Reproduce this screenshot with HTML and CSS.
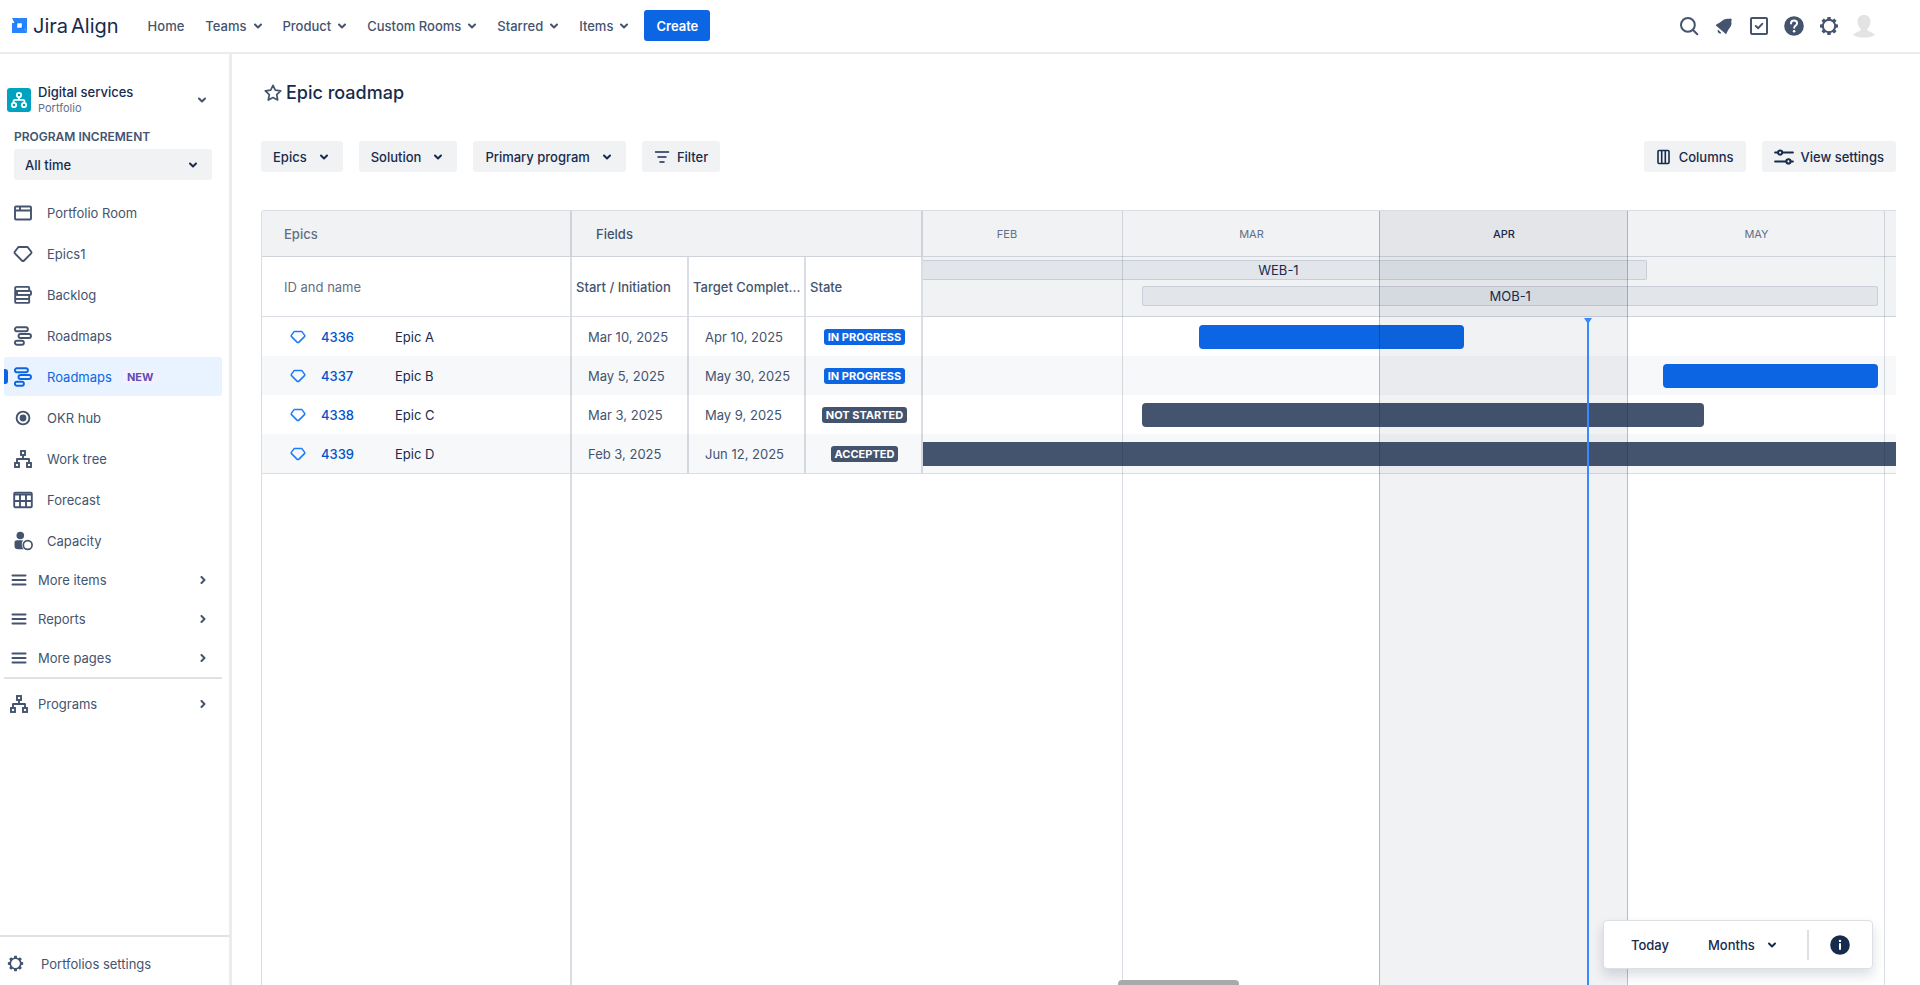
FILE: index.html
```html
<!DOCTYPE html>
<html lang="en">
<head>
<meta charset="utf-8">
<meta name="viewport" content="width=device-width, initial-scale=1">
<title>Epic roadmap - Jira Align</title>
<link rel="stylesheet" href="styles.css">
</head>
<body>
<svg class="sprite" aria-hidden="true">
  <symbol id="chev-down" viewBox="0 0 8 8"><path d="M1 2.5 4 5.5 7 2.5" fill="none" stroke="currentColor" stroke-width="2" stroke-linecap="round" stroke-linejoin="round"/></symbol>
  <symbol id="chev-right" viewBox="0 0 8 8"><path d="M2.5 1 5.5 4 2.5 7" fill="none" stroke="currentColor" stroke-width="2" stroke-linecap="round" stroke-linejoin="round"/></symbol>
  <symbol id="diamond" viewBox="0 0 20 20"><path d="M5.4 3h9.2L18.4 8v1.2L10.6 17h-1.2L1.6 9.200V8z" fill="none" stroke="currentColor" stroke-width="1.900" stroke-linejoin="round"/></symbol>
  <symbol id="gear" viewBox="0 0 20 20"><circle cx="10" cy="10" r="6.200" fill="none" stroke="currentColor" stroke-width="2"/><g fill="currentColor"><path id="tooth" d="M8 4.600 8.400 1h3.200L12 4.600z"/><use href="#tooth" transform="rotate(45 10 10)"/><use href="#tooth" transform="rotate(90 10 10)"/><use href="#tooth" transform="rotate(135 10 10)"/><use href="#tooth" transform="rotate(180 10 10)"/><use href="#tooth" transform="rotate(225 10 10)"/><use href="#tooth" transform="rotate(270 10 10)"/><use href="#tooth" transform="rotate(315 10 10)"/></g></symbol>
  <symbol id="tree" viewBox="0 0 20 20"><g fill="none" stroke="currentColor" stroke-width="1.900"><rect x="8" y="2" width="4" height="4"/><rect x="2" y="14" width="4" height="4"/><rect x="14" y="14" width="4" height="4"/><path d="M10 6v4M4 14v-4h12v4" stroke-linejoin="round"/></g></symbol>
  <symbol id="roadmap" viewBox="0 0 20 20"><g fill="none" stroke="currentColor" stroke-width="1.900"><rect x="1.900" y="1.300" width="13" height="4" rx="2"/><rect x="5.500" y="8" width="12.500" height="4" rx="2"/><rect x="1.900" y="14.700" width="9" height="4" rx="2"/></g></symbol>
  <symbol id="menu" viewBox="0 0 20 20"><path d="M3.500 5.500h13M3.500 10h13M3.500 14.500h13" fill="none" stroke="currentColor" stroke-width="2" stroke-linecap="round"/></symbol>
</svg>

<header class="topbar">
  <a class="logo" href="#">
    <svg class="logo-mark" viewBox="0 0 15 15" aria-hidden="true"><path fill="#2684ff" fill-rule="evenodd" d="M0 0h15v10.500h-2.500L15 15H0V5h2.500L0 0zM5.200 5.200v4.600h4.600V5.200z"/><path fill="#2684ff" d="M12 9h3v6z"/><path fill="#0065ff" opacity=".45" d="M2.500 4.500H9L5.200 5.200 4 8zM12.500 10.500H6l3.800-.7L11 7z"/></svg>
    <span class="logo-text"><span>Jira</span><span>Align</span></span>
  </a>
  <nav class="mainnav">
    <a href="#">Home</a>
    <button type="button">Teams<svg class="chev"><use href="#chev-down"/></svg></button>
    <button type="button">Product<svg class="chev"><use href="#chev-down"/></svg></button>
    <button type="button">Custom Rooms<svg class="chev"><use href="#chev-down"/></svg></button>
    <button type="button">Starred<svg class="chev"><use href="#chev-down"/></svg></button>
    <button type="button">Items<svg class="chev"><use href="#chev-down"/></svg></button>
  </nav>
  <button type="button" class="create">Create</button>
  <div class="tools">
    <button type="button" aria-label="Search"><svg viewBox="0 0 24 24"><g fill="none" stroke="currentColor" stroke-width="2"><circle cx="10.900" cy="10.900" r="6.900"/><path d="M16 16l4.300 4.300" stroke-linecap="round"/></g></svg></button>
    <button type="button" aria-label="Notifications"><svg viewBox="0 0 24 24"><path fill="currentColor" d="M3.600 11.200C5.300 10 8.800 8.300 10.500 6.600 12.500 4.800 15.500 4.200 17.200 5c.8-.6 2-.6 2.300.2.400.7.200 1.400-.3 2 .7 2 .3 4.500-1.500 6.600-1.500 1.800-2.400 4-3.600 6.500z"/><path fill="currentColor" d="M6 15.500l3.400 3.400c-1 .8-2.300.7-3-.1-.8-.9-1-2.200-.4-3.300z"/></svg></button>
    <button type="button" aria-label="Tasks"><svg viewBox="0 0 24 24"><g fill="none" stroke="currentColor" stroke-width="2"><rect x="4" y="4" width="16" height="16" rx="1"/><path d="M8.800 12l2.400 2.200 4-4.400" stroke-linecap="round" stroke-linejoin="round"/></g></svg></button>
    <button type="button" aria-label="Help"><svg viewBox="0 0 24 24"><circle cx="12" cy="12" r="9.800" fill="currentColor"/><path d="M9 9.400c0-1.800 1.300-3 3-3s3.100 1.100 3.100 2.800c0 2.200-2.900 2.300-2.900 4.600" fill="none" stroke="#fff" stroke-width="2" stroke-linecap="round"/><circle cx="12.100" cy="17.200" r="1.300" fill="#fff"/></svg></button>
    <button type="button" aria-label="Settings"><svg class="tool-gear"><use href="#gear"/></svg></button>
    <button type="button" aria-label="Profile"><svg viewBox="0 0 24 24"><path fill="#e3e3e3" d="M12 1c4 0 6.500 2.600 6.500 6.300 0 3.200-1.300 5.700-3 7.200v2c1 1 5 1.700 7.300 4.500C20 23 16 23.500 12 23.500S4 23 1.200 21c2.300-2.800 6.300-3.500 7.300-4.500v-2c-1.700-1.500-3-4-3-7.200C5.500 3.600 8 1 12 1z"/></svg></button>
  </div>
</header>

<div class="shell">
  <aside class="sidebar">
    <button type="button" class="portfolio">
      <span class="portfolio-icon"><svg viewBox="0 0 20 20"><g fill="none" stroke="#fff" stroke-width="1.800"><circle cx="10" cy="5" r="2.200"/><circle cx="5" cy="15" r="2.200"/><circle cx="15" cy="15" r="2.200"/><path d="M10 7.200v2.600M4.500 12.500v-1c0-1 .6-1.600 1.600-1.600h7.800c1 0 1.600.6 1.600 1.600v1"/></g></svg></span>
      <span class="portfolio-text"><span class="portfolio-name">Digital services</span><span class="portfolio-kind">Portfolio</span></span>
      <svg class="chev"><use href="#chev-down"/></svg>
    </button>
    <div class="increment">
      <label for="pi">PROGRAM INCREMENT</label>
      <div class="select-wrap">
        <select id="pi"><option>All time</option></select>
        <svg class="chev"><use href="#chev-down"/></svg>
      </div>
    </div>
    <nav class="sidenav">
      <a href="#"><svg viewBox="0 0 20 20"><g fill="none" stroke="currentColor" stroke-width="1.900"><rect x="2" y="3.500" width="16" height="13" rx="1"/><path d="M2 7.500h16M7 3.500v4"/></g></svg>Portfolio Room</a>
      <a href="#"><svg><use href="#diamond"/></svg>Epics1</a>
      <a href="#"><svg viewBox="0 0 20 20"><g fill="none" stroke="currentColor" stroke-width="1.900"><rect x="2.200" y="1.900" width="14" height="4" rx="1"/><rect x="4" y="5.900" width="14" height="4" rx="1"/><rect x="2.200" y="9.900" width="14" height="4" rx=".5"/><rect x="2.200" y="13.900" width="14" height="4" rx="1"/><path d="M2.200 6v4"/></g></svg>Backlog</a>
      <a href="#"><svg><use href="#roadmap"/></svg>Roadmaps</a>
      <a href="#" class="selected" aria-current="page"><svg><use href="#roadmap"/></svg>Roadmaps<span class="new">NEW</span></a>
      <a href="#"><svg viewBox="0 0 20 20"><circle cx="10" cy="10" r="6.400" fill="none" stroke="currentColor" stroke-width="1.900"/><circle cx="10" cy="10" r="3.400" fill="currentColor"/></svg>OKR hub</a>
      <a href="#"><svg><use href="#tree"/></svg>Work tree</a>
      <a href="#"><svg viewBox="0 0 20 20"><g fill="none" stroke="currentColor" stroke-width="1.900"><rect x="1.200" y="2.800" width="17.600" height="14.400" rx="1"/><path d="M1.200 4.600h17.600M1.200 11h17.600M7 4v13M13 4v13"/></g></svg>Forecast</a>
      <a href="#"><svg viewBox="0 0 20 20"><circle cx="7.300" cy="4.500" r="3.800" fill="currentColor"/><path d="M1.500 11.500c0-1.500 1-2.300 2.500-2.300h6c-2 3-1.300 7 .8 9H5c-2.200 0-3.500-1.200-3.500-3z" fill="currentColor"/><circle cx="14.700" cy="14" r="4.400" fill="none" stroke="currentColor" stroke-width="1.700"/></svg>Capacity</a>
    </nav>
    <nav class="sidegroups">
      <button type="button"><svg class="g-icon"><use href="#menu"/></svg>More items<svg class="chev"><use href="#chev-right"/></svg></button>
      <button type="button"><svg class="g-icon"><use href="#menu"/></svg>Reports<svg class="chev"><use href="#chev-right"/></svg></button>
      <button type="button"><svg class="g-icon"><use href="#menu"/></svg>More pages<svg class="chev"><use href="#chev-right"/></svg></button>
    </nav>
    <nav class="sidegroups programs">
      <button type="button"><svg class="g-icon"><use href="#tree"/></svg>Programs<svg class="chev"><use href="#chev-right"/></svg></button>
    </nav>
    <a class="side-footer" href="#"><svg><use href="#gear"/></svg>Portfolios settings</a>
  </aside>

  <main class="content">
    <h1><svg viewBox="0 0 20 20" aria-hidden="true"><path d="M10 2.300l2.300 4.900 5.400.7-4 3.700 1 5.400L10 14.500 5.300 17l1-5.400-4-3.700 5.400-.7z" fill="none" stroke="#44546f" stroke-width="1.700" stroke-linejoin="round"/></svg>Epic roadmap</h1>
    <div class="toolbar">
      <button type="button" class="btn menu">Epics<svg class="chev"><use href="#chev-down"/></svg></button>
      <button type="button" class="btn menu">Solution<svg class="chev"><use href="#chev-down"/></svg></button>
      <button type="button" class="btn menu">Primary program<svg class="chev"><use href="#chev-down"/></svg></button>
      <button type="button" class="btn"><svg class="btn-icon" viewBox="0 0 16 16"><path d="M1.500 3h13M4 8h8M6 13h4" fill="none" stroke="currentColor" stroke-width="1.500" stroke-linecap="round"/></svg>Filter</button>
      <span class="spacer"></span>
      <button type="button" class="btn"><svg class="btn-icon" viewBox="0 0 16 16"><g fill="none" stroke="currentColor" stroke-width="1.600"><rect x="2" y="1.500" width="11" height="13" rx="1"/><path d="M5.700 2v12M9.300 2v12"/></g></svg>Columns</button>
      <button type="button" class="btn"><svg class="btn-icon wide" viewBox="1 0 18 16"><g fill="none" stroke="currentColor" stroke-width="1.800" stroke-linecap="round"><path d="M2 4h2.500M8.500 4H18M2 12h10M16 12h2"/><circle cx="6.500" cy="4" r="1.900"/><circle cx="14" cy="12" r="1.900"/></g></svg>View settings</button>
    </div>

    <section class="roadmap">
      <div class="grid-pane">
        <table>
          <colgroup><col class="c-name"><col class="c-field"><col class="c-field"><col class="c-field"></colgroup>
          <thead>
            <tr class="h1row"><th>Epics</th><th colspan="3" class="fields">Fields</th></tr>
            <tr class="h2row"><th>ID and name</th><th>Start / Initiation</th><th>Target Complet...</th><th>State</th></tr>
          </thead>
          <tbody>
            <tr><td><div class="epic"><svg><use href="#diamond"/></svg><a href="#">4336</a><span>Epic A</span></div></td><td>Mar 10, 2025</td><td>Apr 10, 2025</td><td class="state"><span class="badge blue">IN PROGRESS</span></td></tr>
            <tr><td><div class="epic"><svg><use href="#diamond"/></svg><a href="#">4337</a><span>Epic B</span></div></td><td>May 5, 2025</td><td>May 30, 2025</td><td class="state"><span class="badge blue">IN PROGRESS</span></td></tr>
            <tr><td><div class="epic"><svg><use href="#diamond"/></svg><a href="#">4338</a><span>Epic C</span></div></td><td>Mar 3, 2025</td><td>May 9, 2025</td><td class="state"><span class="badge">NOT STARTED</span></td></tr>
            <tr><td><div class="epic"><svg><use href="#diamond"/></svg><a href="#">4339</a><span>Epic D</span></div></td><td>Feb 3, 2025</td><td>Jun 12, 2025</td><td class="state"><span class="badge">ACCEPTED</span></td></tr>
          </tbody>
        </table>
        <div class="grid-rest"><div class="rest-name"></div></div>
      </div>
      <div class="timeline">
        <div class="months cols"><span class="partial">FEB</span><span>MAR</span><span class="now">APR</span><span>MAY</span><span></span></div>
        <div class="increments">
          <div class="inc open-left" style="width:74.4%">WEB-1</div>
          <div class="inc" style="margin-left:22.5%;width:75.7%">MOB-1</div>
        </div>
        <div class="lane"><div class="bar blue" style="margin-left:28.4%;width:27.2%"></div></div>
        <div class="lane"><div class="bar blue" style="margin-left:76.1%;width:22.1%"></div></div>
        <div class="lane"><div class="bar" style="margin-left:22.5%;width:57.8%"></div></div>
        <div class="lane"><div class="bar open" style="width:100%"></div></div>
        <div class="lane-end"></div>
        <div class="month-lines cols"><span></span><span></span><span class="now"></span><span></span><span></span></div>
        <div class="today" style="left:68.2%"></div>
        <div class="scroll-thumb"></div>
      </div>
      <div class="zoombar">
        <button type="button">Today</button>
        <label class="scale"><select aria-label="Timeline scale"><option>Months</option></select><svg class="chev"><use href="#chev-down"/></svg></label>
        <span class="rule"></span>
        <button type="button" class="info" aria-label="Legend"><svg viewBox="0 0 20 20"><circle cx="10" cy="10" r="9.800" fill="#172b4d"/><circle cx="10" cy="5.900" r="1.200" fill="#fff"/><path d="M10 9v5" stroke="#fff" stroke-width="2" stroke-linecap="round"/></svg></button>
      </div>
    </section>
  </main>
</div>
</body>
</html>
```
FILE: styles.css
```css
:root {
  --ink: #172b4d;
  --text: #44546f;
  --subtle: #626f86;
  --blue: #0c66e4;
  --line: rgba(9, 30, 66, 0.15);
  --hairline: #ebecf0;
  --fill: #f1f2f4;
}

* { box-sizing: border-box; }

body {
  margin: 0;
  height: 100vh;
  display: flex;
  flex-direction: column;
  overflow: hidden;
  background: #fff;
  color: var(--text);
  font: 400 13px/20px Inter, "Liberation Sans", sans-serif;
}

a { color: inherit; text-decoration: none; }

button, select {
  font: inherit;
  color: inherit;
  border: 0;
  background: none;
  padding: 0;
  margin: 0;
  cursor: pointer;
}

select { appearance: none; }
svg { display: block; flex: none; }
.sprite { position: absolute; width: 0; height: 0; }
.chev { width: 8px; height: 8px; }

/* Top bar */
.topbar {
  flex: none;
  display: flex;
  align-items: center;
  height: 54px;
  padding: 0 44px 1px 12px;
  border-bottom: 2px solid var(--hairline);
  font-weight: 500;
}

.logo {
  display: flex;
  align-items: center;
  gap: 6px;
  margin-right: 29px;
  color: var(--ink);
  font-size: 20px;
  font-weight: 400;
}

.logo-text { display: flex; gap: 3px; }
.logo-mark { width: 15px; height: 15px; }
.mainnav { display: flex; gap: 21px; }
.mainnav button { display: flex; align-items: center; gap: 7px; font-weight: 500; }

.create {
  height: 31px;
  margin-left: 16px;
  padding: 0 12px;
  border-radius: 3px;
  background: var(--blue);
  color: #fff;
  font-weight: 600;
}

.tools { display: flex; gap: 11px; margin-left: auto; }
.tools button, .tools svg { width: 24px; height: 24px; }
.tools .tool-gear { width: 20px; height: 20px; margin: 2px; }

/* Sidebar */
.shell { flex: 1; display: flex; min-height: 0; }

.sidebar {
  flex: none;
  display: flex;
  flex-direction: column;
  width: 232px;
  padding-top: 27px;
  border-right: 3px solid var(--hairline);
}

.portfolio {
  display: flex;
  align-items: center;
  height: 38px;
  padding: 0 23px 0 7px;
  text-align: left;
}

.portfolio-icon {
  display: grid;
  place-items: center;
  width: 24px;
  height: 24px;
  margin-right: 7px;
  border-radius: 3px;
  background: #00a3bf;
}

.portfolio-icon svg { width: 20px; height: 20px; }
.portfolio-text { display: flex; flex-direction: column; flex: 1; }
.portfolio-name { color: var(--ink); font-weight: 500; line-height: 16px; }
.portfolio-kind { color: var(--subtle); font-size: 11px; line-height: 16px; }

.increment { padding: 8px 17px 0 14px; }
.increment label { display: block; font-size: 12px; font-weight: 600; line-height: 20px; }
.select-wrap { position: relative; margin-top: 2px; color: var(--ink); }

.select-wrap select {
  width: 100%;
  height: 31px;
  padding: 0 11px;
  border-radius: 3px;
  background: var(--fill);
  font-weight: 500;
}

.select-wrap .chev { position: absolute; right: 15px; top: 12px; pointer-events: none; }

.sidenav {
  display: flex;
  flex-direction: column;
  gap: 2px;
  padding: 13px 7px 0 4px;
}

.sidenav a {
  position: relative;
  display: flex;
  align-items: center;
  gap: 14px;
  height: 39px;
  padding-left: 9px;
  border-radius: 3px;
}

.sidenav svg { width: 20px; height: 20px; }
.sidenav .selected { background: #e9f2ff; color: var(--blue); }

.sidenav .selected::before {
  content: "";
  position: absolute;
  left: 0;
  top: 12px;
  width: 4px;
  height: 15px;
  border-radius: 0 3px 3px 0;
  background: var(--blue);
}

.new {
  margin-left: -3px;
  padding: 0 4px;
  border-radius: 3px;
  background: #f3f0ff;
  color: #5e4db2;
  font-size: 11px;
  font-weight: 700;
  line-height: 14px;
}

.sidegroups { display: flex; flex-direction: column; margin: 0 7px 0 4px; }

.sidegroups button {
  display: flex;
  align-items: center;
  height: 39px;
  padding: 0 15px 0 5px;
}

.g-icon { width: 20px; height: 20px; margin-right: 9px; }
.sidegroups .chev { margin-left: auto; }
.programs { padding-top: 5px; border-top: 2px solid #dfe1e6; }

.side-footer {
  display: flex;
  align-items: center;
  gap: 17px;
  height: 50px;
  margin-top: auto;
  padding: 5px 0 0 7px;
  border-top: 2px solid #dfe1e6;
}

.side-footer svg { width: 17px; height: 17px; }

/* Main column */
.content {
  flex: 1;
  display: flex;
  flex-direction: column;
  min-width: 0;
  padding: 27px 24px 0 29px;
}

h1 {
  display: flex;
  align-items: center;
  gap: 3px;
  margin: 0 0 36px 2px;
  color: var(--ink);
  font-size: 18px;
  font-weight: 500;
  line-height: 24px;
}

h1 svg { width: 20px; height: 20px; }
.toolbar { display: flex; gap: 16px; margin-bottom: 38px; }
.spacer { flex: 1; }

.btn {
  display: flex;
  align-items: center;
  gap: 7px;
  height: 31px;
  padding: 0 12px;
  border-radius: 3px;
  background: var(--fill);
  color: var(--ink);
  font-weight: 500;
}

.btn.menu { gap: 13px; padding-right: 15px; }
.btn-icon { width: 16px; height: 16px; }
.btn-icon.wide { width: 20px; height: 18px; }

/* Roadmap */
.roadmap {
  position: relative;
  flex: 1;
  display: flex;
  min-height: 0;
  border-top: 1px solid var(--line);
  border-left: 1px solid var(--line);
  border-top-left-radius: 3px;
}

.grid-pane { flex: none; display: flex; flex-direction: column; width: 661px; }

table {
  width: 100%;
  table-layout: fixed;
  border-collapse: separate;
  border-spacing: 0;
}

.c-name { width: 310px; }
th, td { padding: 0 0 0 16px; text-align: left; border-right: 2px solid var(--line); }

th {
  font-weight: 500;
  border-bottom: 1px solid var(--line);
  white-space: nowrap;
}

.h1row th { height: 46px; background: var(--fill); }
.h1row .fields { padding-left: 24px; }
.h2row th { height: 60px; padding-left: 4px; }
.h1row th:first-child, .h2row th:first-child { padding-left: 22px; color: var(--subtle); }
.h2row th:first-child { font-weight: 400; }

tbody td { height: 39px; }
tbody tr:nth-child(even) { background: #f7f8f9; }
tbody td:first-child { padding-left: 28px; }

.epic { display: grid; grid-template-columns: 31px 74px 1fr; align-items: center; color: var(--ink); }
.epic svg { width: 16px; height: 16px; color: #1d7afc; }
.epic a { color: #0055cc; font-weight: 500; }

td.state { padding: 0 0 0 2px; font-size: 11px; line-height: 16px; text-align: center; }

.badge {
  display: inline-block;
  padding: 0 4px;
  border-radius: 3px;
  background: #44546f;
  color: #fff;
  font-weight: 700;
  vertical-align: top;
}

.blue { background: var(--blue); }

.grid-rest { flex: 1; border-top: 1px solid var(--line); }
.rest-name { width: 310px; height: 100%; border-right: 2px solid var(--line); }

.timeline { position: relative; flex: 1; min-width: 0; overflow: hidden; }
.cols { display: grid; grid-template-columns: 200fr 257fr 248fr 257fr 11fr; }

.months {
  height: 46px;
  align-items: center;
  border-bottom: 1px solid var(--line);
  background: var(--fill);
  color: var(--subtle);
  font-size: 11px;
  text-align: center;
}

.months .partial { padding-right: 32px; }
.months .now { color: var(--ink); font-weight: 500; }

.increments {
  display: flex;
  flex-direction: column;
  gap: 6px;
  height: 60px;
  padding-top: 3px;
  border-bottom: 1px solid var(--line);
  background: var(--fill);
}

.inc {
  height: 20px;
  border: 1px solid #c9ced6;
  border-radius: 2px;
  background: #e2e5ea;
  color: var(--ink);
  line-height: 18px;
  text-align: center;
}

.inc.open-left { border-left: 0; border-radius: 0 2px 2px 0; padding-right: 12px; }

.lane { height: 39px; padding-top: 8px; }
.lane:nth-child(even) { background: #f7f8f9; }
.bar { height: 24px; border-radius: 4px; background: #44546f; }
.bar.blue { background: var(--blue); }
.bar.open { border-radius: 0; }
.lane-end { border-top: 1px solid var(--line); }

/* Month boundaries and the current-month tint lie over the bars */
.month-lines { position: absolute; inset: 0; pointer-events: none; }
.month-lines span { border-right: 1px solid var(--line); }
.month-lines span:last-child { border-right: 0; }
.month-lines .now { background: rgba(9, 30, 66, 0.06); border-right-color: rgba(9, 30, 66, 0.25); box-shadow: -1px 0 rgba(9, 30, 66, 0.18); }

.today {
  position: absolute;
  top: 107px;
  bottom: 0;
  width: 2px;
  background: #388bff;
}

.today::before {
  content: "";
  position: absolute;
  left: -3px;
  top: 0;
  border: 4px solid transparent;
  border-top: 6px solid #388bff;
  border-bottom: 0;
}

.scroll-thumb {
  position: absolute;
  left: 20%;
  bottom: 0;
  width: 121px;
  height: 5px;
  border-radius: 4px 4px 0 0;
  background: #a9a9ab;
}

.zoombar {
  position: absolute;
  right: 23px;
  bottom: 16px;
  display: flex;
  align-items: center;
  height: 49px;
  padding: 0 22px 0 27px;
  border: 1px solid #dcdfe4;
  border-radius: 4px;
  background: #fff;
  box-shadow: 0 6px 12px rgba(9, 30, 66, 0.15);
  color: var(--ink);
  font-weight: 500;
}

.scale { display: flex; align-items: center; gap: 13px; margin-left: 39px; }
.rule { width: 2px; height: 30px; margin: 0 21px 0 31px; background: #dcdfe4; }
.info svg { width: 20px; height: 20px; }
```
